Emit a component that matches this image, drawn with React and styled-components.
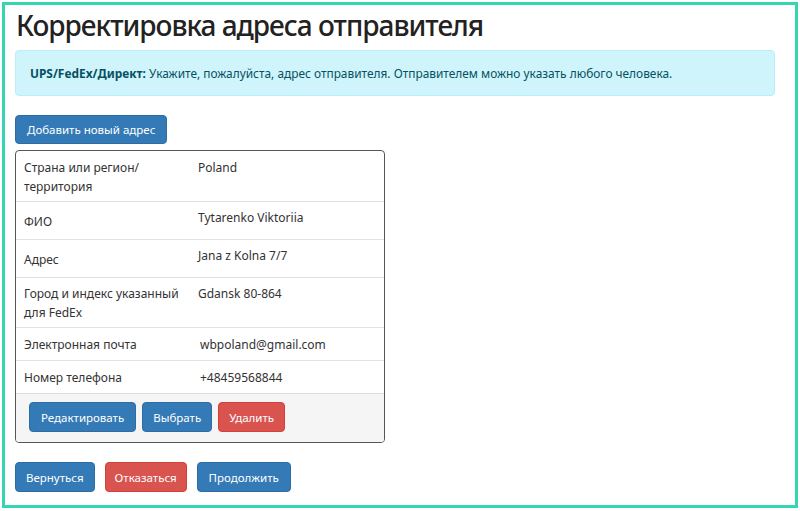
import React from 'react'
import styled, { createGlobalStyle } from 'styled-components';

const GlobalStyle = createGlobalStyle`
  html, body {
    margin: 0;
    padding: 0;
    background: #fff;
  }
  body {
    font-family: "Noto Sans", "Open Sans", Arial, sans-serif;
    color: #333;
  }
  * { box-sizing: border-box; }
`

const Frame = styled.div`
  margin: 2px;
  width: 796px;
  height: 506px;
  border: 3px solid #34d5b3;
  padding: 0 10px;
  overflow: hidden;
`
const Title = styled.h1`
  margin: 2px 0 0 1px;
  font-size: 28px;
  line-height: 36px;
  font-weight: 500;
  letter-spacing: -1px;
  color: #222;
`
const Alert = styled.div`
  margin-top: 7px;
  height: 46px;
  width: 760px;
  display: flex;
  align-items: center;
  padding: 0 14px;
  background: #cff4fc;
  border: 1px solid #b6effb;
  border-radius: 4px;
  color: #055160;
  font-size: 11.9px;

  b { font-weight: 700; }
`
const Button = styled.button`
  height: 30px;
  padding: 0 ${props => props.$pad || 10}px;
  border: 1px solid ${props => props.$danger ? '#d43f3a' : '#2e6da4'};
  border-radius: 4px;
  background: ${props => props.$danger ? '#d9534f' : '#337ab7'};
  color: #fff;
  font-family: inherit;
  font-size: 11.5px;
  font-weight: 400;
  cursor: pointer;
`
const AddButton = styled(Button)`
  margin-top: 19px;
  height: 29px;
`
const Card = styled.div`
  margin-top: 6px;
  width: 370px;
  border: 1px solid #555;
  border-radius: 4px;
  overflow: hidden;
  font-size: 12px;
`
const Row = styled.div`
  display: grid;
  grid-template-columns: ${props => props.$col}px 1fr;
  min-height: ${props => props.$min}px;
  padding: 6px 8px 5px;
  border-top: 1px solid ${props => props.$first ? 'transparent' : '#e2e2e2'};
  line-height: 19px;
  align-items: ${props => props.$center ? 'center' : 'start'};
`
const Label = styled.div`
  align-self: center;
  padding-right: 10px;
`
const Value = styled.div``

const CardFooter = styled.div`
  display: flex;
  gap: 6px;
  padding: 8px 13px 10px;
  background: #f5f5f5;
  border-top: 1px solid #ddd;
`
const Actions = styled.div`
  display: flex;
  gap: 10px;
  margin-top: 19px;
`

const rows = [
  { label: 'Страна или регион/ территория', value: 'Poland' },
  { label: 'ФИО', value: 'Tytarenko Viktoriia' },
  { label: 'Адрес', value: 'Jana z Kolna 7/7' },
  { label: 'Город и индекс указанный для FedEx', value: 'Gdansk 80-864' },
]
const contacts = [
  { label: 'Электронная почта', value: 'wbpoland@gmail.com' },
  { label: 'Номер телефона', value: '+48459568844' },
]

const App = () => {
  return (
    <>
      <GlobalStyle />
      <Frame>
        <Title>Корректировка адреса отправителя</Title>
        <Alert>
          <span><b>UPS/FedEx/Директ:</b> Укажите, пожалуйста, адрес отправителя. Отправителем можно указать любого человека.</span>
        </Alert>
        <AddButton $pad={11}>Добавить новый адрес</AddButton>
        <Card>
          {rows.map((r, i) => (
            <Row key={r.label} $col={174} $min={38} $first={i === 0}>
              <Label>{r.label}</Label>
              <Value>{r.value}</Value>
            </Row>
          ))}
          {contacts.map(r => (
            <Row key={r.label} $col={176} $min={33} $center>
              <Label>{r.label}</Label>
              <Value>{r.value}</Value>
            </Row>
          ))}
          <CardFooter>
            <Button $pad={11}>Редактировать</Button>
            <Button>Выбрать</Button>
            <Button $danger>Удалить</Button>
          </CardFooter>
        </Card>
        <Actions>
          <Button>Вернуться</Button>
          <Button $danger $pad={9}>Отказаться</Button>
          <Button $pad={11}>Продолжить</Button>
        </Actions>
      </Frame>
    </>
  )
}

export default App
